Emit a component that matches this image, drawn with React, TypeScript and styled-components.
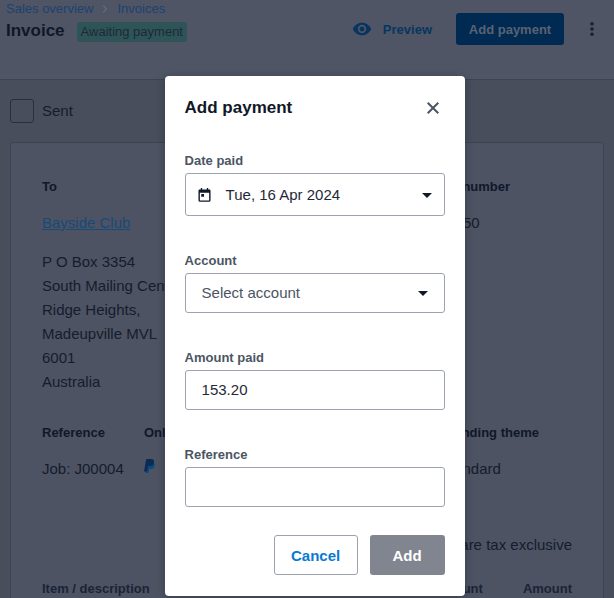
import React from "react";
import styled, { createGlobalStyle } from "styled-components";
import { ChevronRight, EllipsisVertical } from "lucide-react";

const Global = createGlobalStyle`
  html, body { margin: 0; padding: 0; height: 100%; overflow: hidden; }
  body { background: #484e5c; font-family: "Liberation Sans", Arial, sans-serif; }
  * { box-sizing: border-box; }
`;

const Page = styled.div`
  position: relative;
  width: 614px;
  height: 598px;
  overflow: hidden;
  color: #151c2c;
  font-size: 15px;
`;

const Header = styled.header`
  height: 80px;
  background: #4f5564;
  border-bottom: 1px solid #3d4351;
  padding: 0 6px;
  display: flex;
  justify-content: space-between;
`;

const TitleBlock = styled.div`
  display: flex;
  flex-direction: column;
`;

const Crumbs = styled.nav`
  display: flex;
  align-items: center;
  gap: 6px;
  height: 17px;
  line-height: 17px;
  font-size: 13px;
  color: #1c4270;
`;

const Sep = styled.span`
  display: flex;
  color: #7a8090;
`;

const TitleRow = styled.div`
  display: flex;
  align-items: flex-start;
  gap: 12px;
  margin-top: 5px;
`;

const Title = styled.h1`
  margin: 0;
  font-size: 17px;
  line-height: 18px;
  font-weight: 700;
  color: #10172a;
`;

const Badge = styled.span`
  height: 20px;
  padding: 0 4px;
  line-height: 20px;
  font-size: 13px;
  color: #1c2a38;
  background: #2f5458;
  border-radius: 3px;
`;

const Actions = styled.div`
  display: flex;
  align-items: flex-start;
  padding-top: 13px;
  padding-right: 7px;
`;

const PreviewBtn = styled.div`
  display: flex;
  align-items: center;
  gap: 11px;
  height: 32px;
  font-size: 13px;
  font-weight: 700;
  color: #083560;
  margin-right: 24px;
`;

const PrimaryBtn = styled.div`
  width: 108px;
  height: 32px;
  background: #002a52;
  color: #5a6273;
  border-radius: 3px;
  display: flex;
  align-items: center;
  justify-content: center;
  font-size: 13px;
  font-weight: 700;
`;

const MoreBtn = styled.div`
  display: flex;
  align-items: center;
  height: 32px;
  margin-left: 19px;
  color: #10213a;
`;

const SentRow = styled.div`
  display: flex;
  align-items: flex-start;
  gap: 8px;
  padding: 19px 10px 0;
  height: 62px;
  line-height: 24px;
`;

const Box = styled.span`
  width: 24px;
  height: 24px;
  border: 1px solid #272e3d;
  border-radius: 3px;
`;

const Card = styled.section`
  margin: 0 10px;
  height: 470px;
  background: #4d5362;
  border: 1px solid #3d4351;
  border-radius: 3px;
  padding: 36px 31px 0;
`;

const TopRow = styled.div`
  display: flex;
  justify-content: space-between;
`;

const Column = styled.div`
  display: flex;
  flex-direction: column;
`;

const RightColumn = styled(Column)`
  width: 96px;
  margin-right: 62px;
`;

const Label = styled.div`
  font-size: 13px;
  font-weight: 700;
  line-height: 15px;
  color: #10172a;
  white-space: nowrap;
`;

const ClubLink = styled.a`
  margin-top: 17px;
  line-height: 24px;
  color: #184a78;
  text-decoration: underline;
`;

const Address = styled.div`
  margin-top: 15px;
  line-height: 24px;
  white-space: nowrap;
`;

const InvoiceNumber = styled.div`
  margin-top: 17px;
  margin-left: 24px;
  line-height: 24px;
`;

const MetaRow = styled.div`
  display: flex;
  margin-top: 31px;
`;

const MetaRef = styled.div`
  width: 102px;
`;

const MetaOnline = styled.div`
  flex: 1;
`;

const MetaTheme = styled.div`
  width: 132px;
  white-space: nowrap;
`;

const MetaValue = styled.div`
  margin-top: 17px;
  line-height: 24px;
`;

const TaxNote = styled.div`
  margin-top: 52px;
  line-height: 24px;
  text-align: right;
  white-space: nowrap;
`;

const TableHead = styled.div`
  display: flex;
  justify-content: space-between;
  margin-top: 24px;
`;

const HeadLabel = styled(Label)`
  color: #1b2336;
`;

const HeadRight = styled.div`
  display: flex;
  gap: 40px;
`;

const Modal = styled.div`
  position: absolute;
  top: 76px;
  left: 164.6px;
  width: 300px;
  height: 520px;
  background: #fff;
  border-radius: 4px;
  box-shadow: 0 2px 8px rgba(10, 15, 30, 0.3);
  padding: 0 20px;
  display: flex;
  flex-direction: column;
`;

const ModalHead = styled.div`
  display: flex;
  align-items: center;
  justify-content: space-between;
  height: 64px;
`;

const ModalTitle = styled.h2`
  margin: 0;
  font-size: 17px;
  font-weight: 700;
  color: #111827;
`;

const CloseBtn = styled.div`
  display: flex;
  color: #4b5563;
  margin-right: 6px;
`;

const Field = styled.div<{ $gap: number }>`
  display: flex;
  flex-direction: column;
  margin-top: ${(p) => p.$gap}px;
`;

const FieldLabel = styled.label`
  font-size: 13px;
  font-weight: 700;
  line-height: 15px;
  color: #4b5563;
  margin-bottom: 5px;
`;

const Control = styled.div`
  height: 40px;
  border: 1px solid #9ca3af;
  border-radius: 3px;
  padding: 0 16px 2px;
  display: flex;
  align-items: center;
  font-size: 15px;
  color: #1f2937;
`;

const DateControl = styled(Control)`
  height: 43px;
  padding: 0 12px;
`;

const DateText = styled.span`
  margin-left: 15px;
  flex: 1;
`;

const SelectText = styled.span`
  flex: 1;
  color: #4b5563;
`;

const Caret = styled.span`
  width: 0;
  height: 0;
  margin-top: 2px;
  border-left: 5px solid transparent;
  border-right: 5px solid transparent;
  border-top: 5px solid #111827;
`;

const Footer = styled.div`
  margin-top: 28px;
  display: flex;
  justify-content: flex-end;
  gap: 12px;
`;

const CancelBtn = styled.div`
  width: 84px;
  height: 40px;
  border: 1px solid #9ca3af;
  border-radius: 3px;
  display: flex;
  align-items: center;
  justify-content: center;
  font-size: 15px;
  font-weight: 700;
  color: #0a7ad1;
`;

const AddBtn = styled.div`
  width: 75px;
  height: 40px;
  border-radius: 3px;
  background: #81858f;
  display: flex;
  align-items: center;
  justify-content: center;
  font-size: 15px;
  font-weight: 700;
  color: #fff;
`;

const EyeIcon = () => (
  <svg width="20" height="20" viewBox="0 0 24 24" aria-hidden="true">
    <path
      fill="currentColor"
      d="M12 4.5C7 4.5 2.73 7.61 1 12c1.73 4.39 6 7.5 11 7.5s9.27-3.11 11-7.5c-1.73-4.39-6-7.5-11-7.5zM12 17c-2.76 0-5-2.24-5-5s2.24-5 5-5 5 2.24 5 5-2.24 5-5 5zm0-8c-1.66 0-3 1.34-3 3s1.34 3 3 3 3-1.34 3-3-1.34-3-3-3z"
    />
  </svg>
);

const CloseIcon = () => (
  <svg width="12" height="12" viewBox="0 0 12 12" aria-hidden="true">
    <path stroke="currentColor" strokeWidth="2" fill="none" d="M.7.7l10.6 10.6M11.3.7.7 11.3" />
  </svg>
);

const CalendarIcon = () => (
  <svg width="13" height="14" viewBox="0 0 14 15" aria-hidden="true">
    <path fill="#111827" d="M3 0h1.5v1.5h5V0H11v1.5h1.2c.7 0 1.3.6 1.3 1.3v10.7c0 .7-.6 1.3-1.3 1.3H1.8c-.7 0-1.3-.6-1.3-1.3V2.8c0-.7.6-1.3 1.3-1.3H3V0zM2 5v8.5h10V5H2zm1.5 1.5h3v3h-3v-3z" />
  </svg>
);

const PayPalIcon = () => (
  <svg width="12" height="15" viewBox="0 0 12 15" aria-hidden="true">
    <path fill="#0a4a80" d="M3.4 3.4h4.2c2.4 0 3.6 1.2 3.2 3.2-.4 2.2-2 3.4-4.2 3.4H5.2l-.7 4H1.4L3.4 3.4z" />
    <path fill="#0b2b55" d="M2.2 0h4.6c2.5 0 3.6 1.2 3.2 3.2-.5 2.5-2.1 3.7-4.5 3.7H4L3 12.4H0L2.2 0z" />
  </svg>
);

export default function App() {
  return (
    <Page>
      <Global />
      <Header>
        <TitleBlock>
          <Crumbs>
            <span>Sales overview</span>
            <Sep>
              <ChevronRight size={12} strokeWidth={1.6} />
            </Sep>
            <span>Invoices</span>
          </Crumbs>
          <TitleRow>
            <Title>Invoice</Title>
            <Badge>Awaiting payment</Badge>
          </TitleRow>
        </TitleBlock>
        <Actions>
          <PreviewBtn>
            <EyeIcon />
            Preview
          </PreviewBtn>
          <PrimaryBtn>Add payment</PrimaryBtn>
          <MoreBtn>
            <EllipsisVertical size={18} strokeWidth={2.8} />
          </MoreBtn>
        </Actions>
      </Header>
      <SentRow>
        <Box />
        Sent
      </SentRow>
      <Card>
        <TopRow>
          <Column>
            <Label>To</Label>
            <ClubLink>Bayside Club</ClubLink>
            <Address>
              P O Box 3354
              <br />
              South Mailing Centre
              <br />
              Ridge Heights,
              <br />
              Madeupville MVL
              <br />
              6001
              <br />
              Australia
            </Address>
          </Column>
          <RightColumn>
            <Label>Invoice number</Label>
            <InvoiceNumber>00050</InvoiceNumber>
          </RightColumn>
        </TopRow>
        <MetaRow>
          <MetaRef>
            <Label>Reference</Label>
            <MetaValue>Job: J00004</MetaValue>
          </MetaRef>
          <MetaOnline>
            <Label>Online payments</Label>
            <MetaValue>
              <PayPalIcon />
            </MetaValue>
          </MetaOnline>
          <MetaTheme>
            <Label>Branding theme</Label>
            <MetaValue>Standard</MetaValue>
          </MetaTheme>
        </MetaRow>
        <TaxNote>Amounts are tax exclusive</TaxNote>
        <TableHead>
          <HeadLabel>Item / description</HeadLabel>
          <HeadRight>
            <HeadLabel>Discount</HeadLabel>
            <HeadLabel>Amount</HeadLabel>
          </HeadRight>
        </TableHead>
      </Card>
      <Modal>
        <ModalHead>
          <ModalTitle>Add payment</ModalTitle>
          <CloseBtn>
            <CloseIcon />
          </CloseBtn>
        </ModalHead>
        <Field $gap={13}>
          <FieldLabel>Date paid</FieldLabel>
          <DateControl>
            <CalendarIcon />
            <DateText>Tue, 16 Apr 2024</DateText>
            <Caret />
          </DateControl>
        </Field>
        <Field $gap={37}>
          <FieldLabel>Account</FieldLabel>
          <Control>
            <SelectText>Select account</SelectText>
            <Caret />
          </Control>
        </Field>
        <Field $gap={37}>
          <FieldLabel>Amount paid</FieldLabel>
          <Control>153.20</Control>
        </Field>
        <Field $gap={37}>
          <FieldLabel>Reference</FieldLabel>
          <Control />
        </Field>
        <Footer>
          <CancelBtn>Cancel</CancelBtn>
          <AddBtn>Add</AddBtn>
        </Footer>
      </Modal>
    </Page>
  );
}
